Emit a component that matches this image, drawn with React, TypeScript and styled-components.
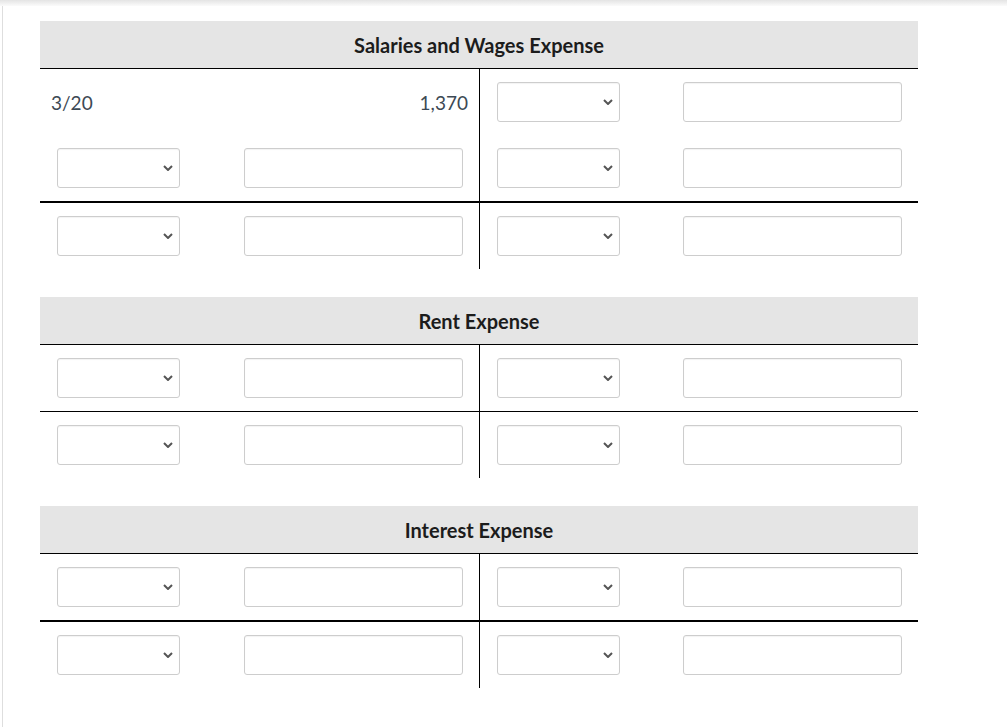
import styled, { createGlobalStyle } from "styled-components";

// one side of a T-account row: either a posted entry or empty inputs
interface IEntry {
  date: string;
  amount: string;
}

interface IRow {
  debit?: IEntry;
  credit?: IEntry;
  rule?: number; // width of the line drawn above the row
}

interface IAccount {
  title: string;
  rows: IRow[];
}

const accounts: IAccount[] = [
  {
    title: "Salaries and Wages Expense",
    rows: [{ debit: { date: "3/20", amount: "1,370" } }, {}, { rule: 2 }],
  },
  {
    title: "Rent Expense",
    rows: [{}, { rule: 1 }],
  },
  {
    title: "Interest Expense",
    rows: [{}, { rule: 2 }],
  },
];

function Chevron() {
  return (
    <ChevronIcon width="10" height="6" viewBox="0 0 10 6">
      <path d="M1 1l4 4 4-4" fill="none" stroke="#555" strokeWidth="2" />
    </ChevronIcon>
  );
}

function Side({ entry, left }: { entry?: IEntry; left?: boolean }) {
  if (entry) {
    return (
      <PostedCell $left={left}>
        <span>{entry.date}</span>
        <span>{entry.amount}</span>
      </PostedCell>
    );
  }
  return (
    <InputCell $left={left}>
      <SelectWrap>
        <Select defaultValue="">
          <option value=""></option>
        </Select>
        <Chevron />
      </SelectWrap>
      <TextInput type="text" />
    </InputCell>
  );
}

function App() {
  return (
    <>
      <GlobalStyle />
      <TopShade />
      <Frame>
        {accounts.map((account) => (
          <Account key={account.title}>
            <Header>{account.title}</Header>
            {account.rows.map((row, i) => (
              <Row key={i} $rule={row.rule}>
                <Side entry={row.debit} left />
                <Side entry={row.credit} />
              </Row>
            ))}
          </Account>
        ))}
      </Frame>
    </>
  );
}

export default App;

const GlobalStyle = createGlobalStyle`
  body {
    margin: 0;
    background: #fff;
    font-family: Lato, "Open Sans", sans-serif;
  }
`;

const TopShade = styled.div`
  height: 6px;
  background: linear-gradient(to bottom, #e4e4e4, #fbfbfb);
`;

const Frame = styled.div`
  margin-left: 2px;
  border-left: 1px solid #dedede;
  min-height: 721px;
  padding: 15px 0 0 37px;
  box-sizing: border-box;
`;

const Account = styled.section`
  width: 878px;
  margin-bottom: 28px;
`;

const Header = styled.div`
  height: 47px;
  background: #e5e5e5;
  border-bottom: 1px solid #000;
  display: flex;
  align-items: center;
  justify-content: center;
  font-weight: 700;
  font-size: 20px;
  color: #1c1c1c;
`;

const Row = styled.div<{ $rule?: number }>`
  display: grid;
  grid-template-columns: 440px 438px;
  border-top: ${(props) => (props.$rule ? `${props.$rule}px solid #000` : "none")};
`;

const PostedCell = styled.div<{ $left?: boolean }>`
  height: 66px;
  display: flex;
  align-items: center;
  justify-content: space-between;
  padding: 0 11px;
  border-right: ${(props) => (props.$left ? "1px solid #000" : "none")};
  font-size: 19px;
  color: #3d4954;
`;

const InputCell = styled.div<{ $left?: boolean }>`
  height: 66px;
  display: grid;
  grid-template-columns: 123px 219px;
  justify-content: space-between;
  align-items: center;
  padding: 0 16px 0 17px;
  border-right: ${(props) => (props.$left ? "1px solid #000" : "none")};
`;

const SelectWrap = styled.div`
  position: relative;
  height: 40px;
`;

const Select = styled.select`
  appearance: none;
  width: 100%;
  height: 40px;
  box-sizing: border-box;
  border: 1px solid #cdcdcd;
  border-radius: 3px;
  background: #fff;
  box-shadow: inset 0 1px 1px rgba(0, 0, 0, 0.05);
  font-family: inherit;
  font-size: 16px;
`;

const ChevronIcon = styled.svg`
  position: absolute;
  right: 7px;
  top: 17px;
  pointer-events: none;
`;

const TextInput = styled.input`
  width: 100%;
  height: 40px;
  box-sizing: border-box;
  border: 1px solid #cdcdcd;
  border-radius: 3px;
  background: #fff;
  box-shadow: inset 0 1px 1px rgba(0, 0, 0, 0.05);
  font-family: inherit;
  font-size: 16px;
  padding: 0 8px;
`;
